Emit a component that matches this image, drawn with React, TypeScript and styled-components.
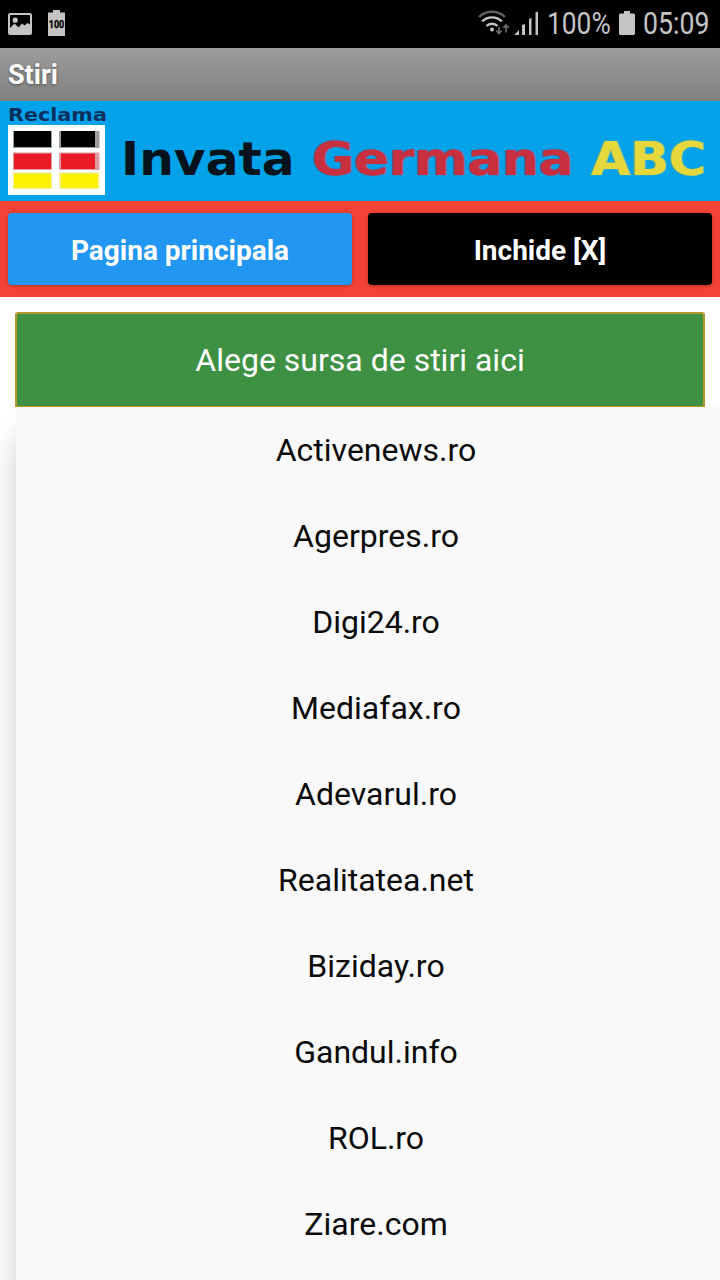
import React from "react";
import styled, { createGlobalStyle } from "styled-components";

const GlobalStyle = createGlobalStyle`
  *, *::before, *::after { box-sizing: border-box; }
  body { margin: 0; background: #fff; font-family: Roboto, sans-serif; }
`;

const Screen = styled.div`
  width: 720px;
  height: 1280px;
  display: flex;
  flex-direction: column;
  overflow: hidden;
  background: #fff;
`;

const StatusBar = styled.header`
  height: 48px;
  flex: none;
  display: flex;
  align-items: center;
  justify-content: space-between;
  padding: 0 9px 0 8px;
  background: #000;
  color: #c4c4c4;
`;

const StatusGroup = styled.div`
  display: flex;
  align-items: center;
  height: 48px;
`;

const StatusIcon = styled.svg<{ $gap?: number; $lift?: number }>`
  display: block;
  flex: none;
  margin-right: ${(p) => p.$gap ?? 0}px;
  margin-bottom: ${(p) => p.$lift ?? 0}px;
`;

const StatusText = styled.span<{ $width: number; $scale: number }>`
  display: block;
  width: ${(p) => p.$width}px;
  font-size: 31px;
  line-height: 48px;
  white-space: nowrap;
  transform: scaleX(${(p) => p.$scale});
  transform-origin: left center;
`;

const TitleBar = styled.div`
  height: 53px;
  flex: none;
  padding: 1px 0 0 8px;
  background: linear-gradient(#9c9c9c, #808080);
  color: #fff;
  font-size: 27px;
  font-weight: 700;
  line-height: 53px;
  text-shadow: 0 1px 3px rgba(0, 0, 0, 0.4);
`;

const Banner = styled.div`
  height: 100px;
  flex: none;
  display: flex;
  background: #03a2e9;
  font-family: "DejaVu Sans", sans-serif;
  font-weight: 700;
`;

const BannerLogo = styled.div`
  width: 121px;
  flex: none;
  padding: 4px 0 0 8px;
`;

const BannerTag = styled.div`
  height: 20px;
  color: #06305e;
  font-size: 18px;
  line-height: 20px;
  white-space: nowrap;
  transform: scaleX(1.15);
  transform-origin: left center;
`;

const BannerWord = styled.span<{ $color: string; $width: number; $scale: number; $edge?: string }>`
  display: block;
  width: ${(p) => p.$width}px;
  flex: none;
  padding-top: 31px;
  color: ${(p) => p.$color};
  font-size: 46px;
  line-height: 54px;
  white-space: nowrap;
  transform: scaleX(${(p) => p.$scale});
  transform-origin: left center;
  text-shadow: ${(p) => p.$edge ?? "none"};
`;

const Toolbar = styled.nav`
  height: 96px;
  flex: none;
  display: grid;
  grid-template-columns: 1fr 1fr;
  gap: 16px;
  padding: 12px 8px;
  background: #f44336;
`;

const ToolButton = styled.button<{ $bg: string }>`
  height: 72px;
  padding: 2px 0 0;
  border: 0;
  border-radius: 4px;
  background: ${(p) => p.$bg};
  box-shadow: 0 1px 4px rgba(0, 0, 0, 0.28);
  color: #fff;
  font: 700 28px/72px Roboto, sans-serif;
`;

const Content = styled.main`
  flex: 1;
  min-height: 0;
  display: flex;
  flex-direction: column;
  padding: 15px 0 0 15px;
`;

const SourceButton = styled.button`
  width: 690px;
  height: 95px;
  flex: none;
  padding: 0;
  border: 2px solid #b8962c;
  border-bottom-width: 1px;
  border-radius: 3px 3px 0 0;
  background: #3e9142;
  color: #fff;
  font: 400 32px/92px Roboto, sans-serif;
`;

const Dropdown = styled.ul`
  flex: 1;
  margin: 0 0 0 1px;
  padding: 0;
  list-style: none;
  background: #f9f9f9;
  box-shadow: 0 30px 28px rgba(0, 0, 0, 0.2);
  clip-path: inset(0 0 0 -16px);
`;

const SourceItem = styled.li`
  height: 86px;
  padding-left: 16px;
  color: #0a0a0a;
  font-size: 32px;
  line-height: 87px;
  text-align: center;
`;

const sources = [
  "Activenews.ro",
  "Agerpres.ro",
  "Digi24.ro",
  "Mediafax.ro",
  "Adevarul.ro",
  "Realitatea.net",
  "Biziday.ro",
  "Gandul.info",
  "ROL.ro",
  "Ziare.com",
];

function PictureIcon() {
  return (
    <StatusIcon $gap={16} $lift={1} width="24" height="22" viewBox="0 0 24 22">
      <rect x="1" y="1" width="22" height="20" rx="1" fill="none" stroke="#c4c4c4" strokeWidth="2" />
      <path d="M2 15 6.5 10.5l4 4 3.5-4 2.5 2 3-2.5 2.5 1.5V21H2Z" fill="#c4c4c4" />
      <circle cx="7.2" cy="7.2" r="2.6" fill="#c4c4c4" />
    </StatusIcon>
  );
}

function FullBatteryIcon() {
  return (
    <StatusIcon $lift={2} width="17" height="26" viewBox="0 0 17 26">
      <path d="M0 2.5h5V0h7v2.5h5V26H0Z" fill="#c4c4c4" />
      <text x="8.5" y="18" textAnchor="middle" textLength="15.5" lengthAdjust="spacingAndGlyphs" fontFamily="Roboto, sans-serif" fontSize="10" fontWeight="700" fill="#000" stroke="#000" strokeWidth="0.3">
        100
      </text>
    </StatusIcon>
  );
}

function WifiIcon() {
  return (
    <StatusIcon $gap={4} $lift={2} width="32" height="26" viewBox="0 0 32 26" fill="none">
      <path d="M1 7C8 0 20 0 27 7" stroke="#606060" strokeWidth="2.4" />
      <path d="M4.2 11.5c5.5-5.5 14.1-5.5 19.6 0M8.5 16c3-3 8-3 11 0" stroke="#c4c4c4" strokeWidth="2.4" />
      <circle cx="14" cy="19.5" r="2" fill="#c4c4c4" />
      <path d="M21 17v6.5m-2.7-2.8 2.7 2.8 2.7-2.8M28 22.5V15m-2.7 2.8L28 15l2.7 2.8" stroke="#6a6a6a" strokeWidth="1.7" />
    </StatusIcon>
  );
}

function SignalIcon() {
  return (
    <StatusIcon $gap={8} $lift={2} width="25" height="24" viewBox="0 0 25 24" fill="#c4c4c4">
      <path d="M0 24 5 19v5ZM8 24V14l3-1v11ZM15 24V8l2.5-1v17ZM21.5 24V1.5l2.5-1V24Z" />
    </StatusIcon>
  );
}

function BatteryIcon() {
  return (
    <StatusIcon $gap={8} $lift={2} width="16" height="24" viewBox="0 0 16 24">
      <path d="M1 2.5h4V0h6v2.5h4l1 1V23l-1 1H1l-1-1V3.5Z" fill="#c4c4c4" />
    </StatusIcon>
  );
}

function FlagLogo() {
  return (
    <svg width="97" height="70" viewBox="0 0 97 70" style={{ display: "block" }}>
      <rect width="97" height="70" fill="#fcffff" />
      <path d="M5 6h39v17H5ZM51 6h40.5v17H51Z" fill="#a09c9e" />
      <path d="M6 6h37v16H6ZM53 6h34v16H53Z" fill="#000" />
      <path d="M5 27.5h39V45H5ZM51 27.5h40.5V45H51Z" fill="#dc9ca2" />
      <path d="M6 28.5h37V44H6ZM53 28.5h34V44H53Z" fill="#eb1c26" />
      <path d="M5 47.5h39V64H5ZM51 47.5h40.5V64H51Z" fill="#f6ee9c" />
      <path d="M6 48.5h37V63H6ZM53 48.5h37V63H53Z" fill="#fff200" />
    </svg>
  );
}

export default function App() {
  return (
    <>
      <GlobalStyle />
      <Screen>
        <StatusBar>
          <StatusGroup>
            <PictureIcon />
            <FullBatteryIcon />
          </StatusGroup>
          <StatusGroup>
            <WifiIcon />
            <SignalIcon />
            <StatusText $width={72} $scale={0.85}>100%</StatusText>
            <BatteryIcon />
            <StatusText $width={68} $scale={0.86}>05:09</StatusText>
          </StatusGroup>
        </StatusBar>
        <TitleBar>Stiri</TitleBar>
        <Banner>
          <BannerLogo>
            <BannerTag>Reclama</BannerTag>
            <FlagLogo />
          </BannerLogo>
          <BannerWord $color="#06121c" $width={191} $scale={1.06}>Invata</BannerWord>
          <BannerWord $color="#c9303f" $width={279} $scale={1.115} $edge="-1px 0 1px #6c4663, 1px 0 1px #a968a8">Germana</BannerWord>
          <BannerWord $color="#e6d83c" $width={125} $scale={1.1} $edge="-1px 0 1px #6fae78, 1px 0 1px #b8d27c">ABC</BannerWord>
        </Banner>
        <Toolbar>
          <ToolButton $bg="#2196f3">Pagina principala</ToolButton>
          <ToolButton $bg="#000">Inchide [X]</ToolButton>
        </Toolbar>
        <Content>
          <SourceButton>Alege sursa de stiri aici</SourceButton>
          <Dropdown>
            {sources.map((name) => (
              <SourceItem key={name}>{name}</SourceItem>
            ))}
          </Dropdown>
        </Content>
      </Screen>
    </>
  );
}
